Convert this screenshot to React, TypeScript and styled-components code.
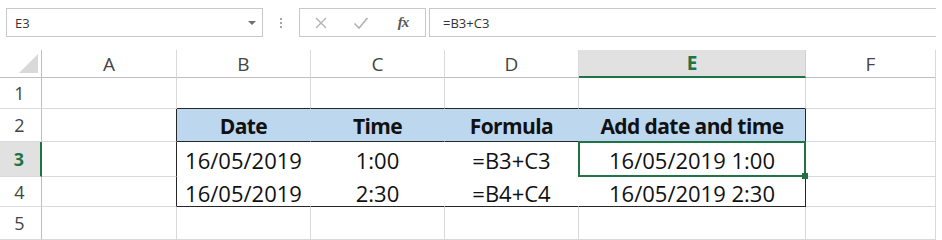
import React from "react";
import styled, { createGlobalStyle } from "styled-components";

type Edge = "grid" | "dark" | "none";

interface CellSpec {
  text: string;
  right: Edge;
  bottom: Edge;
  fill: string;
  bold: boolean;
  selected: boolean;
}

const COLUMNS = ["A", "B", "C", "D", "E", "F"];
const COL_WIDTHS = [135, 134, 134, 134, 227, 130];
const ROW_HEIGHTS = [31, 33, 35, 30, 33];
const SELECTED = { row: 3, col: 4 };
const TABLE = { top: 2, bottom: 4, left: 1, right: 4 };

const values: Record<number, string[]> = {
  2: ["", "Date", "Time", "Formula", "Add date and time", ""],
  3: ["", "16/05/2019", "1:00", "=B3+C3", "16/05/2019 1:00", ""],
  4: ["", "16/05/2019", "2:30", "=B4+C4", "16/05/2019 2:30", ""],
};

const EDGE_COLORS: Record<Edge, string> = {
  grid: "#d9d9d9",
  dark: "#262626",
  none: "transparent",
};

const GREEN = "#217346";

const GlobalStyle = createGlobalStyle`
  body {
    margin: 0;
    background: #ffffff;
    font-family: "Open Sans", "Liberation Sans", sans-serif;
  }
`;

const Page = styled.div`
  width: 942px;
  height: 240px;
  overflow: hidden;
  background: #ffffff;
`;

const FormulaBar = styled.div`
  display: flex;
  align-items: stretch;
  height: 29px;
  padding: 8px 6px 0 6px;
`;

const NameBox = styled.div`
  box-sizing: border-box;
  width: 257px;
  border: 1px solid #c8c8c8;
  display: flex;
  align-items: center;
  justify-content: space-between;
  padding: 0 6px 0 8px;
  font-size: 13px;
  color: #333333;
`;

const DropArrow = styled.span`
  width: 0;
  height: 0;
  border-left: 4px solid transparent;
  border-right: 4px solid transparent;
  border-top: 4px solid #707070;
`;

const Grip = styled.div`
  width: 36px;
  display: flex;
  flex-direction: column;
  align-items: center;
  justify-content: center;
  gap: 2px;
`;

const GripDot = styled.span`
  width: 2px;
  height: 2px;
  background: #a6a6a6;
`;

const FunctionBox = styled.div`
  box-sizing: border-box;
  width: 127px;
  border: 1px solid #c8c8c8;
  display: flex;
  align-items: center;
  padding-left: 1px;
`;

const FnSlot = styled.div<{ $width: number }>`
  width: ${(p) => p.$width}px;
  display: flex;
  justify-content: center;
  align-items: center;
`;

const FxLabel = styled.span`
  font-family: "Liberation Serif", "DejaVu Serif", serif;
  font-style: italic;
  font-weight: 700;
  font-size: 15px;
  color: #595959;
  letter-spacing: -1px;
`;

const FormulaInput = styled.div`
  flex: 1;
  box-sizing: border-box;
  margin-left: 3px;
  border: 1px solid #c8c8c8;
  border-right: none;
  display: flex;
  align-items: center;
  padding-left: 13px;
  font-size: 13px;
  color: #333333;
`;

const Sheet = styled.div`
  margin-top: 13px;
  width: 936px;
  display: grid;
  grid-template-columns: 42px ${COL_WIDTHS.map((w) => `${w}px`).join(" ")};
  grid-template-rows: 28px ${ROW_HEIGHTS.map((h) => `${h}px`).join(" ")};
`;

const Corner = styled.div`
  box-sizing: border-box;
  border-right: 1px solid #bfbfbf;
  border-bottom: 1px solid #bfbfbf;
  display: flex;
  align-items: flex-end;
  justify-content: flex-end;
  padding: 0 3px 4px 0;
`;

const ColumnHeader = styled.div<{ $active: boolean }>`
  box-sizing: border-box;
  display: flex;
  align-items: center;
  justify-content: center;
  background: ${(p) => (p.$active ? "#e1e1e1" : "#ffffff")};
  border-right: 1px solid ${(p) => (p.$active ? "#d0d0d0" : "#dadada")};
  border-bottom: ${(p) => (p.$active ? `2px solid ${GREEN}` : "1px solid #bfbfbf")};
  font-size: 19px;
  font-weight: ${(p) => (p.$active ? 700 : 400)};
  color: ${(p) => (p.$active ? GREEN : "#444444")};
`;

const RowHeader = styled.div<{ $active: boolean }>`
  box-sizing: border-box;
  display: flex;
  align-items: center;
  justify-content: center;
  padding-right: 2px;
  background: ${(p) => (p.$active ? "#e1e1e1" : "#ffffff")};
  border-right: ${(p) => (p.$active ? `2px solid ${GREEN}` : "1px solid #bfbfbf")};
  border-bottom: 1px solid #dadada;
  font-size: 18px;
  font-weight: ${(p) => (p.$active ? 700 : 400)};
  color: ${(p) => (p.$active ? GREEN : "#444444")};
`;

const Cell = styled.div<{ $right: Edge; $bottom: Edge; $fill: string; $bold: boolean }>`
  position: relative;
  box-sizing: border-box;
  display: flex;
  align-items: center;
  justify-content: center;
  padding-top: 2px;
  border-right: 1px solid ${(p) => EDGE_COLORS[p.$right]};
  border-bottom: 1px solid ${(p) => EDGE_COLORS[p.$bottom]};
  background: ${(p) => p.$fill};
  font-size: ${(p) => (p.$bold ? 21 : 22)}px;
  font-weight: ${(p) => (p.$bold ? 700 : 400)};
  letter-spacing: ${(p) => (p.$bold ? "-0.6px" : "0")};
  color: #111111;
  white-space: nowrap;
`;

const Selection = styled.div`
  position: absolute;
  top: -1px;
  left: -1px;
  right: -1px;
  bottom: -1px;
  border: 2px solid ${GREEN};
  z-index: 2;
  pointer-events: none;
`;

const FillHandle = styled.span`
  position: absolute;
  right: -4px;
  bottom: -4px;
  width: 6px;
  height: 6px;
  background: ${GREEN};
`;

const inTable = (row: number, col: number) =>
  row >= TABLE.top && row <= TABLE.bottom && col >= TABLE.left && col <= TABLE.right;

const buildCell = (row: number, col: number): CellSpec => {
  const text = values[row]?.[col] ?? "";
  let right: Edge = "grid";
  let bottom: Edge = "grid";
  if (inTable(row, col)) {
    right = col === TABLE.right ? "dark" : "none";
    bottom = row === TABLE.top || row === TABLE.bottom ? "dark" : "none";
  } else {
    if (col === TABLE.left - 1 && row >= TABLE.top && row <= TABLE.bottom) right = "dark";
    if (row === TABLE.top - 1 && col >= TABLE.left && col <= TABLE.right) bottom = "dark";
  }
  return {
    text,
    right,
    bottom,
    fill: row === TABLE.top && inTable(row, col) ? "#bdd7ee" : "#ffffff",
    bold: row === TABLE.top,
    selected: row === SELECTED.row && col === SELECTED.col,
  };
};

const CloseIcon = () => (
  <svg width="14" height="14" viewBox="0 0 14 14">
    <path d="M2 2 L12 12 M12 2 L2 12" stroke="#b3b3b3" strokeWidth="1.4" fill="none" />
  </svg>
);

const CheckIcon = () => (
  <svg width="16" height="14" viewBox="0 0 16 14">
    <path d="M1.5 7.5 L6 12 L14.5 2" stroke="#b3b3b3" strokeWidth="1.6" fill="none" />
  </svg>
);

const SelectAllTriangle = () => (
  <svg width="19" height="19" viewBox="0 0 19 19">
    <polygon points="19,0 19,19 0,19" fill="#d9d9d9" />
  </svg>
);

const App: React.FC = () => {
  const rows = ROW_HEIGHTS.map((_, i) => i + 1);

  return (
    <>
      <GlobalStyle />
      <Page>
        <FormulaBar>
          <NameBox>
            <span>E3</span>
            <DropArrow />
          </NameBox>
          <Grip>
            <GripDot />
            <GripDot />
            <GripDot />
          </Grip>
          <FunctionBox>
            <FnSlot $width={40}>
              <CloseIcon />
            </FnSlot>
            <FnSlot $width={40}>
              <CheckIcon />
            </FnSlot>
            <FnSlot $width={44}>
              <FxLabel>fx</FxLabel>
            </FnSlot>
          </FunctionBox>
          <FormulaInput>=B3+C3</FormulaInput>
        </FormulaBar>

        <Sheet>
          <Corner>
            <SelectAllTriangle />
          </Corner>
          {COLUMNS.map((letter, col) => (
            <ColumnHeader key={letter} $active={col === SELECTED.col}>
              {letter}
            </ColumnHeader>
          ))}
          {rows.map((row) => (
            <React.Fragment key={row}>
              <RowHeader $active={row === SELECTED.row}>{row}</RowHeader>
              {COLUMNS.map((letter, col) => {
                const cell = buildCell(row, col);
                return (
                  <Cell
                    key={letter + row}
                    $right={cell.right}
                    $bottom={cell.bottom}
                    $fill={cell.fill}
                    $bold={cell.bold}
                  >
                    {cell.text}
                    {cell.selected && (
                      <Selection>
                        <FillHandle />
                      </Selection>
                    )}
                  </Cell>
                );
              })}
            </React.Fragment>
          ))}
        </Sheet>
      </Page>
    </>
  );
};

export default App;
